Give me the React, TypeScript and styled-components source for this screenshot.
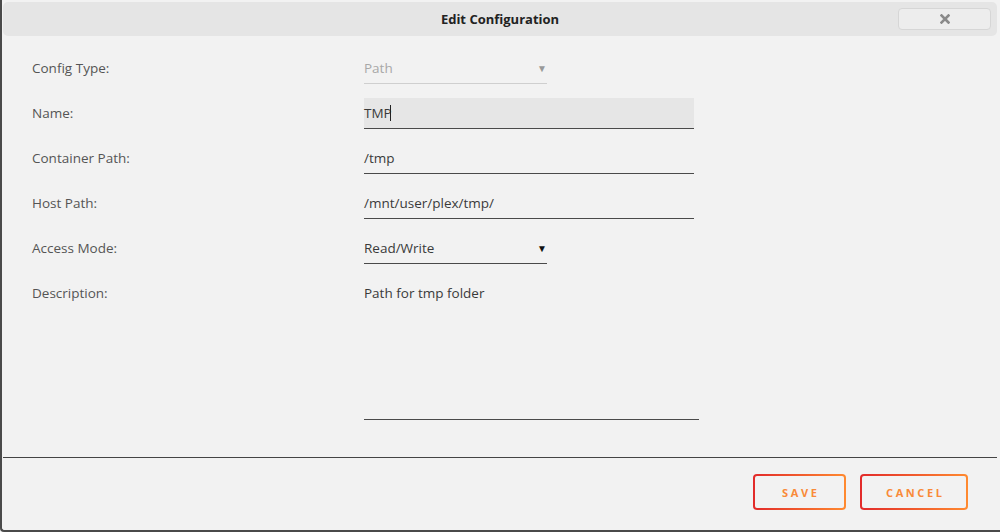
import styled, { createGlobalStyle } from "styled-components";

const GlobalStyle = createGlobalStyle`
    html, body {
        margin: 0;
        padding: 0;
        background: #f2f2f2;
    }
    * {
        box-sizing: border-box;
    }
`;

const StyledDialog = styled.div`
    width: 1000px;
    height: 532px;
    display: flex;
    flex-direction: column;
    background: #f2f2f2;
    border-left: 2px solid #4a4a4a;
    border-bottom: 2px solid #4a4a4a;
    border-bottom-left-radius: 4px;
    font-family: "Open Sans", "Noto Sans", sans-serif;
    overflow: hidden;
`;

const StyledTitleBar = styled.div`
    position: relative;
    display: flex;
    align-items: center;
    justify-content: center;
    height: 34px;
    margin: 2px 3px 0 1px;
    background: #e5e5e5;
    border-radius: 5px;
`;

const StyledTitle = styled.div`
    font-size: 13px;
    font-weight: 700;
    color: #222;
`;

// close button sits over the title bar at its right end
const StyledCloseBtn = styled.button`
    position: absolute;
    right: 6px;
    top: 6px;
    width: 93px;
    height: 22px;
    display: flex;
    align-items: center;
    justify-content: center;
    background: #ededed;
    border: 1px solid #d6d6d6;
    border-radius: 4px;
    padding: 0;
`;

const StyledForm = styled.div`
    display: flex;
    flex-direction: column;
    gap: 14px;
    padding: 17px 0 0 30px;
`;

const StyledRow = styled.div`
    display: grid;
    grid-template-columns: 332px 1fr;
    align-items: start;
`;

const StyledLabel = styled.div`
    font-size: 13.5px;
    line-height: 31px;
    color: #555;
`;

const StyledInput = styled.div<{ $active?: boolean }>`
    width: 330px;
    height: 31px;
    display: flex;
    align-items: center;
    font-size: 13.5px;
    color: #3a3a3a;
    background: ${(p) => (p.$active ? "#e6e6e6" : "transparent")};
    border-bottom: 1px solid #4a4a4a;
`;

const StyledCaret = styled.span`
    display: inline-block;
    width: 1px;
    height: 16px;
    margin-left: -2px;
    background: #222;
`;

const StyledSelect = styled.div<{ $disabled?: boolean }>`
    width: 183px;
    height: 31px;
    display: flex;
    align-items: center;
    justify-content: space-between;
    padding-right: 0;
    font-size: 13.5px;
    color: ${(p) => (p.$disabled ? "#a8a8a8" : "#3a3a3a")};
    border-bottom: 1px solid ${(p) => (p.$disabled ? "#cfcfcf" : "#4a4a4a")};
`;

const StyledArrow = styled.span<{ $disabled?: boolean }>`
    font-size: 10px;
    color: ${(p) => (p.$disabled ? "#999" : "#111")};
`;

const StyledTextArea = styled.div`
    width: 335px;
    height: 142px;
    padding-top: 7px;
    font-size: 13.5px;
    line-height: 17px;
    color: #3a3a3a;
    border-bottom: 1px solid #4a4a4a;
`;

const StyledDivider = styled.div`
    height: 1px;
    margin: 37px 3px 0 1px;
    background: #444;
`;

const StyledFooter = styled.div`
    display: flex;
    justify-content: flex-end;
    gap: 14px;
    padding: 16px 32px 0 0;
`;

const StyledButton = styled.button<{ $width: number }>`
    width: ${(p) => p.$width}px;
    height: 36px;
    padding: 0;
    border: 2px solid transparent;
    border-radius: 4px;
    background:
        linear-gradient(#f2f2f2, #f2f2f2) padding-box,
        linear-gradient(90deg, #e22a2a, #ff8a30) border-box;
    color: #f98a38;
    font-family: "Open Sans", "Noto Sans", sans-serif;
    font-size: 11px;
    font-weight: 700;
    letter-spacing: 2.6px;
    text-indent: 2.6px;
`;

const CloseIcon = () => (
    <svg width="10" height="10" viewBox="0 0 10 10">
        <path d="M1.5 1.5 L8.5 8.5 M8.5 1.5 L1.5 8.5" stroke="#8a8a8a" strokeWidth="2.6" strokeLinecap="square" />
    </svg>
);

const App = () => {
    return (
        <>
            <GlobalStyle />
            <StyledDialog>
                <StyledTitleBar>
                    <StyledTitle>Edit Configuration</StyledTitle>
                    <StyledCloseBtn>
                        <CloseIcon />
                    </StyledCloseBtn>
                </StyledTitleBar>
                <StyledForm>
                    <StyledRow>
                        <StyledLabel>Config Type:</StyledLabel>
                        <StyledSelect $disabled>
                            Path
                            <StyledArrow $disabled>▼</StyledArrow>
                        </StyledSelect>
                    </StyledRow>
                    <StyledRow>
                        <StyledLabel>Name:</StyledLabel>
                        <StyledInput $active>
                            TMP<StyledCaret />
                        </StyledInput>
                    </StyledRow>
                    <StyledRow>
                        <StyledLabel>Container Path:</StyledLabel>
                        <StyledInput>/tmp</StyledInput>
                    </StyledRow>
                    <StyledRow>
                        <StyledLabel>Host Path:</StyledLabel>
                        <StyledInput>/mnt/user/plex/tmp/</StyledInput>
                    </StyledRow>
                    <StyledRow>
                        <StyledLabel>Access Mode:</StyledLabel>
                        <StyledSelect>
                            Read/Write
                            <StyledArrow>▼</StyledArrow>
                        </StyledSelect>
                    </StyledRow>
                    <StyledRow>
                        <StyledLabel>Description:</StyledLabel>
                        <StyledTextArea>Path for tmp folder</StyledTextArea>
                    </StyledRow>
                </StyledForm>
                <StyledDivider />
                <StyledFooter>
                    <StyledButton $width={93}>SAVE</StyledButton>
                    <StyledButton $width={108}>CANCEL</StyledButton>
                </StyledFooter>
            </StyledDialog>
        </>
    );
};

export default App;
